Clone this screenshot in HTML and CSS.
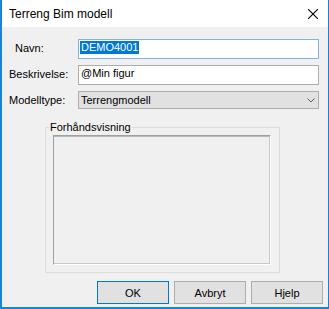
FILE: index.html
```html
<!DOCTYPE html>
<html lang="no">
<head>
  <meta charset="UTF-8">
  <title>Terreng Bim modell</title>
  <link rel="stylesheet" href="styles.css">
</head>
<body>
  <div class="window">
    <div class="titlebar">
      <span class="title">Terreng Bim modell</span>
      <svg class="close" width="10" height="10" viewBox="0 0 10 10">
        <path d="M0 0 L10 10 M10 0 L0 10" stroke="#000" stroke-width="1.1" fill="none"/>
      </svg>
    </div>
    <div class="content">
      <div class="form">
        <label class="label indent">Navn:</label>
        <div class="field focused"><span class="selected">DEMO4001</span></div>
        <label class="label">Beskrivelse:</label>
        <div class="field"><span class="text">@Min figur</span></div>
        <label class="label">Modelltype:</label>
        <div class="combo">
          <span>Terrengmodell</span>
          <svg class="chevron" width="8" height="5" viewBox="0 0 8 5">
            <path d="M0.5 0.5 L4 4 L7.5 0.5" stroke="#606060" stroke-width="1" fill="none"/>
          </svg>
        </div>
      </div>
      <fieldset class="group">
        <legend>Forhåndsvisning</legend>
        <div class="preview"></div>
      </fieldset>
      <div class="buttons">
        <button class="btn default">OK</button>
        <button class="btn">Avbryt</button>
        <button class="btn">Hjelp</button>
      </div>
    </div>
  </div>
</body>
</html>
```

FILE: styles.css
```css
:root {
  --accent: #1883d7;
  --face: #f0f0f0;
  --btn-face: #e1e1e1;
  --btn-border: #adadad;
  --select: #0078d7;
}
* { box-sizing: border-box; margin: 0; padding: 0; }
body {
  width: 329px;
  height: 309px;
  font-family: "Liberation Sans", Arial, sans-serif;
  font-size: 11px;
  color: #000;
  background: var(--face);
}
.window {
  height: 309px;
  border-left: 2px solid var(--accent);
  border-right: 1px solid var(--accent);
  border-bottom: 2px solid var(--accent);
  display: flex;
  flex-direction: column;
}
.titlebar {
  height: 29px;
  background: #fff;
  display: flex;
  align-items: center;
  justify-content: space-between;
  padding: 0 10px 0 7px;
}
.title { font-size: 12px; }
.close { display: block; }
.content {
  flex: 1;
  padding: 12px 5px 3px 7px;
  display: flex;
  flex-direction: column;
}
.form {
  display: grid;
  grid-template-columns: 69px 1fr;
  row-gap: 6px;
  margin-right: 4px;
}
.label {
  line-height: 13px;
  padding-top: 3px;
}
.indent { margin-left: 6px; }
.field {
  height: 20px;
  background: #fff;
  border: 1px solid var(--btn-border);
  padding: 1px 0 0 1px;
}
.field.focused { border-color: #7eb4ea; }
.field .text {
  display: block;
  line-height: 13px;
  padding-left: 1px;
}
.selected {
  display: inline-block;
  line-height: 13px;
  padding: 0 1px;
  background: var(--select);
  color: #fff;
}
.combo {
  height: 18px;
  background: var(--btn-face);
  border: 1px solid var(--btn-border);
  padding: 0 2px 0 2px;
  display: flex;
  align-items: center;
  justify-content: space-between;
}
.chevron { display: block; margin-right: 1px; }
.group {
  margin: 12px 0 0 36px;
  width: 235px;
  border: 1px solid #dcdcdc;
  min-width: 0;
}
.group legend {
  margin-left: 3px;
  padding: 0 1px;
  line-height: 13px;
}
.preview {
  height: 130px;
  margin: 1px 8px 7px 7px;
  border-top: 1px solid #a0a0a0;
  border-left: 1px solid #a0a0a0;
  border-right: 1px solid #fff;
  border-bottom: 1px solid #fff;
  box-shadow: inset 0 1px 0 #b9b9b9, inset -1px -1px 0 #c8c8c8;
}
.buttons {
  display: flex;
  justify-content: flex-end;
  gap: 5px;
  margin-top: 8px;
}
.btn {
  width: 72px;
  height: 23px;
  background: var(--btn-face);
  border: 1px solid var(--btn-border);
  font-family: inherit;
  font-size: 11px;
  color: #000;
}
.btn.default { border-color: var(--select); }
```
